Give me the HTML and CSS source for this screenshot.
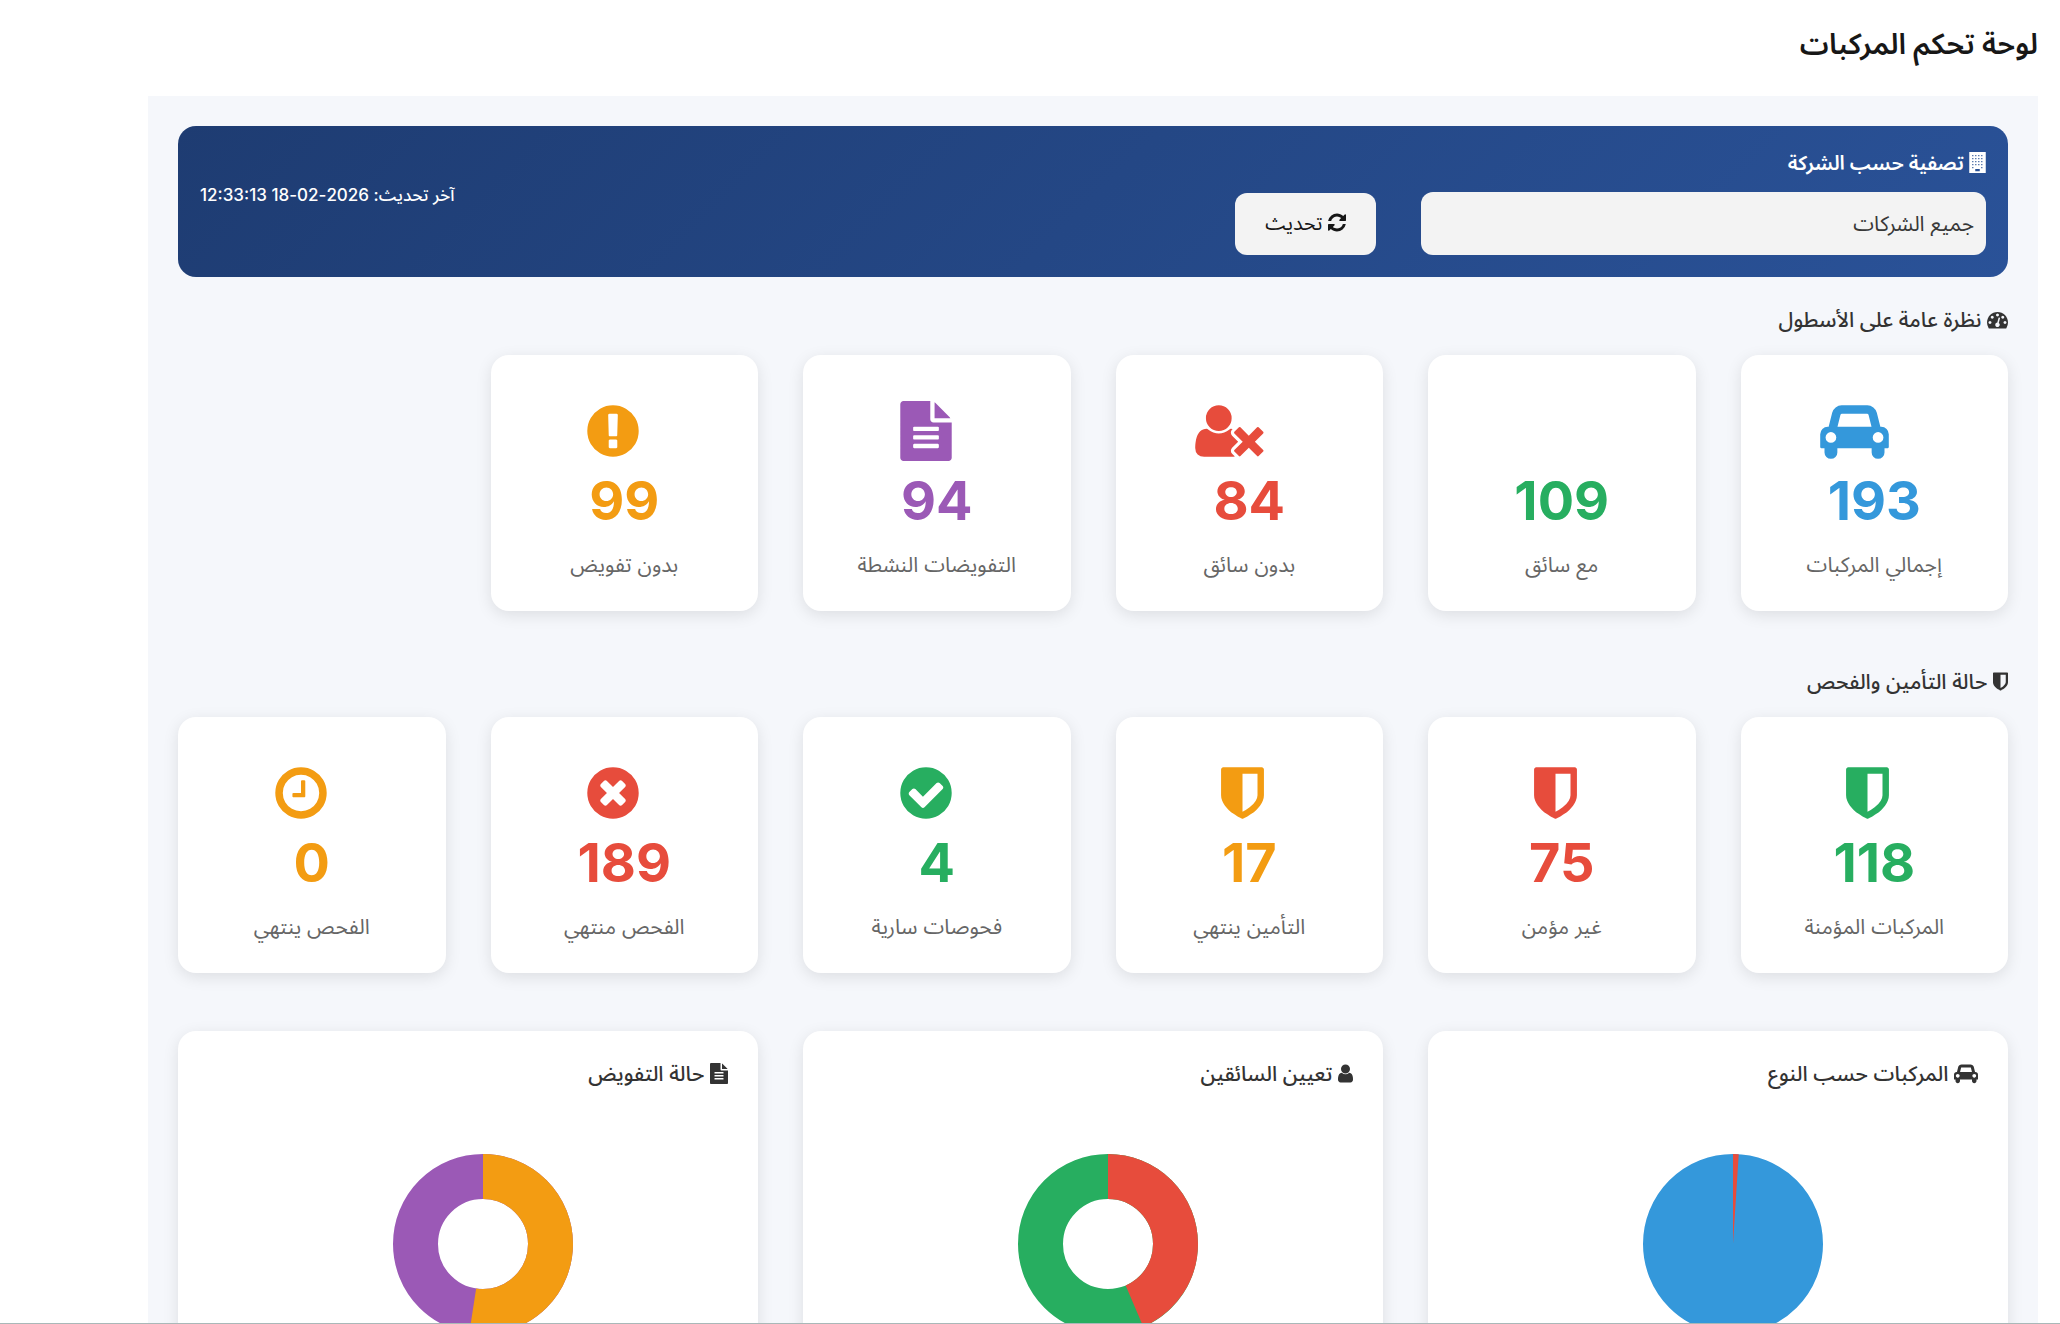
FILE: index.html
```html
<!DOCTYPE html>
<html lang="ar" dir="rtl">
<head>
  <meta charset="UTF-8">
  <meta name="viewport" content="width=device-width, initial-scale=1.0">
  <title>لوحة تحكم المركبات</title>
  <link rel="stylesheet" href="styles.css">
</head>
<body>
  <!-- Icon Set -->
  <svg class="icon-set" aria-hidden="true">
    <symbol id="car" viewBox="0 0 2048 1792"><path d="M480 1088q0-66-47-113t-113-47-113 47-47 113 47 113 113 47 113-47 47-113zm36-320h1016l-89-357q-2-8-14-17.5t-21-9.5h-768q-9 0-21 9.5t-14 17.5zm1372 320q0-66-47-113t-113-47-113 47-47 113 47 113 113 47 113-47 47-113zm160-96v384q0 14-9 23t-23 9h-96v128q0 80-56 136t-136 56-136-56-56-136v-128h-1024v128q0 80-56 136t-136 56-136-56-56-136v-128h-96q-14 0-23-9t-9-23v-384q0-93 65.5-158.5t158.5-65.5h28l105-419q23-94 104-157.5t179-63.5h768q98 0 179 63.5t104 157.5l105 419h28q93 0 158.5 65.5t65.5 158.5z"/></symbol>
    <symbol id="user-times" viewBox="0 0 2048 1792"><path d="M704 896q-159 0-271.5-112.5t-112.5-271.5 112.5-271.5 271.5-112.5 271.5 112.5 112.5 271.5-112.5 271.5-271.5 112.5zm1077 320l249 249q9 9 9 23 0 13-9 22l-136 136q-9 9-22 9-14 0-23-9l-249-249-249 249q-9 9-23 9-13 0-22-9l-136-136q-9-9-9-22 0-14 9-23l249-249-249-249q-9-9-9-23 0-13 9-22l136-136q9-9 22-9 14 0 23 9l249 249 249-249q9-9 23-9 13 0 22 9l136 136q9 9 9 22 0 14-9 23zm-498 0l-181 181q-37 37-37 91 0 53 37 90l83 83q-21 3-44 3h-874q-121 0-194-69t-73-190q0-53 3.5-103.5t14-109 26.5-108.5 43-97.5 62-81 85.5-53.5 111.5-20q19 0 39 17 154 122 319 122t319-122q20-17 39-17 28 0 57 6-28 27-41 50t-13 56q0 54 37 91z"/></symbol>
    <symbol id="file" viewBox="128 0 1536 1792"><path d="M1596 476q14 14 28 36h-472v-472q22 14 36 28zm-476 164h544v1056q0 40-28 68t-68 28h-1344q-40 0-68-28t-28-68v-1600q0-40 28-68t68-28h800v544q0 40 28 68t68 28zm160 736v-64q0-14-9-23t-23-9h-704q-14 0-23 9t-9 23v64q0 14 9 23t23 9h704q14 0 23-9t9-23zm0-256v-64q0-14-9-23t-23-9h-704q-14 0-23 9t-9 23v64q0 14 9 23t23 9h704q14 0 23-9t9-23zm0-256v-64q0-14-9-23t-23-9h-704q-14 0-23 9t-9 23v64q0 14 9 23t23 9h704q14 0 23-9t9-23z"/></symbol>
    <symbol id="exclamation" viewBox="128 0 1536 1792"><path d="M896 128q209 0 385.5 103t279.5 279.5 103 385.5-103 385.5-279.5 279.5-385.5 103-385.5-103-279.5-279.5-103-385.5 103-385.5 279.5-279.5 385.5-103zm128 1247v-190q0-14-9-23.5t-22-9.5h-192q-13 0-23 10t-10 23v190q0 13 10 23t23 10h192q13 0 22-9.5t9-23.5zm-2-344l18-621q0-12-10-18-10-8-24-8h-220q-14 0-24 8-10 6-10 18l17 621q0 10 10 17.5t24 7.5h185q14 0 23.5-7.5t10.5-17.5z"/></symbol>
    <symbol id="shield" viewBox="256 0 1280 1792"><path d="M1344 960v-640h-448v1137q119-63 213-137 235-184 235-360zm192-768v768q0 86-33.5 170.5t-83 150-118 127.5-126.5 103-121 77.5-89.5 49.5-42.5 20q-12 6-26 6t-26-6q-16-7-42.5-20t-89.5-49.5-121-77.5-126.5-103-118-127.5-83-150-33.5-170.5v-768q0-26 19-45t45-19h1152q26 0 45 19t19 45z"/></symbol>
    <symbol id="check" viewBox="128 0 1536 1792"><path d="M1412 734q0-28-18-46l-91-90q-19-19-45-19t-45 19l-408 407-226-226q-19-19-45-19t-45 19l-91 90q-18 18-18 46 0 27 18 45l362 362q19 19 45 19 27 0 46-19l543-543q18-18 18-45zm252 162q0 209-103 385.5t-279.5 279.5-385.5 103-385.5-103-279.5-279.5-103-385.5 103-385.5 279.5-279.5 385.5-103 385.5 103 279.5 279.5 103 385.5z"/></symbol>
    <symbol id="times" viewBox="128 0 1536 1792"><path d="M1277 1122q0-26-19-45l-181-181 181-181q19-19 19-45 0-27-19-46l-90-90q-19-19-46-19-26 0-45 19l-181 181-181-181q-19-19-45-19-27 0-46 19l-90 90q-19 19-19 46 0 26 19 45l181 181-181 181q-19 19-19 45 0 27 19 46l90 90q19 19 46 19 26 0 45-19l181-181 181 181q19 19 45 19 27 0 46-19l90-90q19-19 19-46zm387-226q0 209-103 385.5t-279.5 279.5-385.5 103-385.5-103-279.5-279.5-103-385.5 103-385.5 279.5-279.5 385.5-103 385.5 103 279.5 279.5 103 385.5z"/></symbol>
    <symbol id="clock" viewBox="128 0 1536 1792"><path d="M1024 544v448q0 14-9 23t-23 9h-320q-14 0-23-9t-9-23v-64q0-14 9-23t23-9h224v-352q0-14 9-23t23-9h64q14 0 23 9t9 23zm416 352q0-148-73-273t-198-198-273-73-273 73-198 198-73 273 73 273 198 198 273 73 273-73 198-198 73-273zm224 0q0 209-103 385.5t-279.5 279.5-385.5 103-385.5-103-279.5-279.5-103-385.5 103-385.5 279.5-279.5 385.5-103 385.5 103 279.5 279.5 103 385.5z"/></symbol>
    <symbol id="dashboard" viewBox="0 0 1792 1792"><path d="M384 1152q0-53-37.5-90.5t-90.5-37.5-90.5 37.5-37.5 90.5 37.5 90.5 90.5 37.5 90.5-37.5 37.5-90.5zm192-448q0-53-37.5-90.5t-90.5-37.5-90.5 37.5-37.5 90.5 37.5 90.5 90.5 37.5 90.5-37.5 37.5-90.5zm428 481l101-382q6-26-7.5-48.5t-38.5-29.5-48 6.5-30 39.5l-101 382q-60 5-107 43.5t-63 98.5q-20 77 20 146t117 89 146-20 89-117q16-60-6-117t-72-91zm660-33q0-53-37.5-90.5t-90.5-37.5-90.5 37.5-37.5 90.5 37.5 90.5 90.5 37.5 90.5-37.5 37.5-90.5zm-640-640q0-53-37.5-90.5t-90.5-37.5-90.5 37.5-37.5 90.5 37.5 90.5 90.5 37.5 90.5-37.5 37.5-90.5zm448 192q0-53-37.5-90.5t-90.5-37.5-90.5 37.5-37.5 90.5 37.5 90.5 90.5 37.5 90.5-37.5 37.5-90.5zm320 448q0 261-141 483-19 29-54 29h-1402q-35 0-54-29-141-221-141-483 0-182 71-348t191-286 286-191 348-71 348 71 286 191 191 286 71 348z"/></symbol>
    <symbol id="refresh" viewBox="128 0 1536 1792"><path d="M1639 1056q0 5-1 7-64 268-268 434.5t-478 166.5q-146 0-282.5-55t-243.5-157l-129 129q-19 19-45 19t-45-19-19-45v-448q0-26 19-45t45-19h448q26 0 45 19t19 45-19 45l-137 137q71 66 161 102t187 36q134 0 250-65t186-179q11-17 53-117 8-23 30-23h192q13 0 22.5 9.5t9.5 22.5zm25-800v448q0 26-19 45t-45 19h-448q-26 0-45-19t-19-45 19-45l138-138q-148-137-349-137-134 0-250 65t-186 179q-11 17-53 117-8 23-30 23h-199q-13 0-22.5-9.5t-9.5-22.5v-7q65-268 270-434.5t480-166.5q146 0 284 55.5t245 156.5l130-129q19-19 45-19t45 19 19 45z"/></symbol>
    <symbol id="user" viewBox="256 0 1280 1792"><path d="M1536 1399q0 109-62.5 187t-150.5 78h-854q-88 0-150.5-78t-62.5-187q0-85 8.5-160.5t31.5-152 58.5-131 94-89 134.5-34.5q131 128 313 128t313-128q76 0 134.5 34.5t94 89 58.5 131 31.5 152 8.5 160.5zm-256-887q0 159-112.5 271.5t-271.5 112.5-271.5-112.5-112.5-271.5 112.5-271.5 271.5-112.5 271.5 112.5 112.5 271.5z"/></symbol>
    <symbol id="building" viewBox="0 0 1408 1792"><path fill-rule="evenodd" d="M0 0h1408v1792H0zM256 256v96h96v-96zm256 0v96h96v-96zm256 0v96h96v-96zm256 0v96h96v-96zM256 512v96h96v-96zm256 0v96h96v-96zm256 0v96h96v-96zm256 0v96h96v-96zM256 768v96h96v-96zm256 0v96h96v-96zm256 0v96h96v-96zm256 0v96h96v-96zM256 1024v96h96v-96zm256 0v96h96v-96zm256 0v96h96v-96zm256 0v96h96v-96zM256 1280v96h96v-96zm768 0v96h96v-96zM512 1440v192h384v-192z"/></symbol>
  </svg>

  <!-- Header Section -->
  <header>
    <h1>لوحة تحكم المركبات</h1>
  </header>

  <main>
    <!-- Company Filter -->
    <section class="filter-bar">
      <div class="filter-company">
        <label for="company"><svg class="icon icon-building"><use href="#building"/></svg> تصفية حسب الشركة</label>
        <select id="company">
          <option value="">جميع الشركات</option>
        </select>
      </div>
      <button type="button"><svg class="icon icon-round"><use href="#refresh"/></svg> تحديث</button>
      <p class="last-update">آخر تحديث: 2026-02-18 12:33:13</p>
    </section>

    <!-- Fleet Overview -->
    <section class="stats">
      <h2><svg class="icon icon-square"><use href="#dashboard"/></svg> نظرة عامة على الأسطول</h2>
      <div class="cards">
        <div class="card blue">
          <svg class="card-icon wide"><use href="#car"/></svg>
          <p class="number">193</p>
          <p class="caption">إجمالي المركبات</p>
        </div>
        <div class="card green">
          <div class="card-icon"></div>
          <p class="number">109</p>
          <p class="caption">مع سائق</p>
        </div>
        <div class="card red">
          <svg class="card-icon wide"><use href="#user-times"/></svg>
          <p class="number">84</p>
          <p class="caption">بدون سائق</p>
        </div>
        <div class="card purple">
          <svg class="card-icon"><use href="#file"/></svg>
          <p class="number">94</p>
          <p class="caption">التفويضات النشطة</p>
        </div>
        <div class="card orange">
          <svg class="card-icon"><use href="#exclamation"/></svg>
          <p class="number">99</p>
          <p class="caption">بدون تفويض</p>
        </div>
      </div>
    </section>

    <!-- Insurance and Inspection -->
    <section class="stats">
      <h2><svg class="icon icon-narrow"><use href="#shield"/></svg> حالة التأمين والفحص</h2>
      <div class="cards">
        <div class="card green">
          <svg class="card-icon narrow"><use href="#shield"/></svg>
          <p class="number">118</p>
          <p class="caption">المركبات المؤمنة</p>
        </div>
        <div class="card red">
          <svg class="card-icon narrow"><use href="#shield"/></svg>
          <p class="number">75</p>
          <p class="caption">غير مؤمن</p>
        </div>
        <div class="card orange">
          <svg class="card-icon narrow"><use href="#shield"/></svg>
          <p class="number">17</p>
          <p class="caption">التأمين ينتهي</p>
        </div>
        <div class="card green">
          <svg class="card-icon"><use href="#check"/></svg>
          <p class="number">4</p>
          <p class="caption">فحوصات سارية</p>
        </div>
        <div class="card red">
          <svg class="card-icon"><use href="#times"/></svg>
          <p class="number">189</p>
          <p class="caption">الفحص منتهي</p>
        </div>
        <div class="card orange">
          <svg class="card-icon"><use href="#clock"/></svg>
          <p class="number">0</p>
          <p class="caption">الفحص ينتهي</p>
        </div>
      </div>
    </section>

    <!-- Charts -->
    <section class="charts">
      <div class="chart-card">
        <h2><svg class="icon icon-wide"><use href="#car"/></svg> المركبات حسب النوع</h2>
        <svg class="chart" viewBox="0 0 360 360">
          <circle class="pie blue" cx="180" cy="180" r="90"/>
          <circle class="pie red" cx="180" cy="180" r="90" pathLength="193" stroke-dasharray="2 191"/>
        </svg>
      </div>
      <div class="chart-card">
        <h2><svg class="icon icon-narrow"><use href="#user"/></svg> تعيين السائقين</h2>
        <svg class="chart" viewBox="0 0 360 360">
          <circle class="ring green" cx="180" cy="180" r="135"/>
          <circle class="ring red" cx="180" cy="180" r="135" pathLength="193" stroke-dasharray="84 109"/>
        </svg>
      </div>
      <div class="chart-card">
        <h2><svg class="icon icon-round"><use href="#file"/></svg> حالة التفويض</h2>
        <svg class="chart" viewBox="0 0 360 360">
          <circle class="ring purple" cx="180" cy="180" r="135"/>
          <circle class="ring orange" cx="180" cy="180" r="135" pathLength="189" stroke-dasharray="99 90"/>
        </svg>
      </div>
    </section>
  </main>
</body>
</html>
```
FILE: styles.css
```css
/* General Styles */
* {
  box-sizing: border-box;
}

body {
  font-family: Inter, "Noto Sans Arabic", "Segoe UI", sans-serif;
  font-size: 21px;
  line-height: 30px;
  margin: 0;
  height: 100vh;
  overflow: hidden;
  padding: 0 22px 0 148px;
  border-bottom: 1px solid #a9b8b8;
  background-color: #fff;
  color: #333;
}

h1, h2, p {
  margin: 0;
}

h1 {
  padding: 24px 0 32px;
  font-size: 29px;
  line-height: 40px;
  font-weight: 600;
  color: #171717;
}

h2 {
  font-size: 21px;
  line-height: 30px;
  font-weight: 500;
}

main {
  padding: 30px;
  background-color: #f5f7fb;
}

/* Colors */
.blue { color: #3498db; }
.green { color: #27ae60; }
.red { color: #e74c3c; }
.purple { color: #9b59b6; }
.orange { color: #f39c12; }

/* Icons */
.icon-set {
  display: none;
}

.icon {
  height: 21px;
  fill: currentColor;
  vertical-align: -3px;
}

.icon-wide { width: 24px; }
.icon-square { width: 21px; }
.icon-round { width: 18px; }
.icon-building { width: 17px; }
.icon-narrow { width: 15px; }

/* Filter Bar */
.filter-bar {
  display: flex;
  align-items: flex-end;
  gap: 45px;
  padding: 22px;
  border-radius: 18px;
  background: linear-gradient(135deg, #1e3c72, #2a5298);
  color: #fff;
}

.filter-company {
  flex: 0 0 565px;
}

.filter-company label {
  display: block;
  margin-bottom: 14px;
  font-size: 20px;
  font-weight: 600;
}

select, button {
  border: none;
  border-radius: 12px;
  background-color: #f3f3f3;
  font-family: inherit;
}

select {
  display: block;
  width: 100%;
  height: 63px;
  padding: 0 12px;
  appearance: none;
  font-size: 21px;
  color: #383838;
}

button {
  height: 62px;
  padding: 0 30px;
  font-size: 20px;
  color: #171717;
  cursor: pointer;
}

.last-update {
  align-self: center;
  margin-inline-start: auto;
  padding-bottom: 14px;
  font-size: 17px;
  font-weight: 500;
}

/* Stat Cards */
.stats h2 {
  padding-top: 28px;
  margin-bottom: 20px;
}

.stats {
  margin-bottom: 58px;
}

.filter-bar + .stats {
  margin-bottom: 28px;
}

.cards {
  display: grid;
  grid-template-columns: repeat(6, 1fr);
  gap: 45px;
}

.card, .chart-card {
  border-radius: 18px;
  background-color: #fff;
  box-shadow: 0 4px 16px rgba(0, 0, 0, 0.1);
}

.card {
  padding: 46px 30px 31px;
  text-align: center;
}

.card-icon {
  display: block;
  width: 52px;
  height: 60px;
  margin-inline-start: calc(50% - 15px);
  fill: currentColor;
}

.card-icon.wide { width: 69px; }
.card-icon.narrow { width: 43px; }

.number {
  font-size: 54px;
  line-height: 80px;
  font-weight: 700;
}

.caption {
  margin-top: 9px;
  color: #666;
}

/* Charts */
.charts {
  display: grid;
  grid-template-columns: repeat(3, 1fr);
  gap: 45px;
}

.chart-card {
  height: 450px;
  padding: 28px 30px;
}

.chart {
  display: block;
  width: 180px;
  margin: 65px calc(50% - 105px) 0 auto;
  transform: rotate(-90deg);
}

.chart circle {
  fill: none;
  stroke: currentColor;
}

.pie { stroke-width: 180; }
.ring { stroke-width: 90; }
```
